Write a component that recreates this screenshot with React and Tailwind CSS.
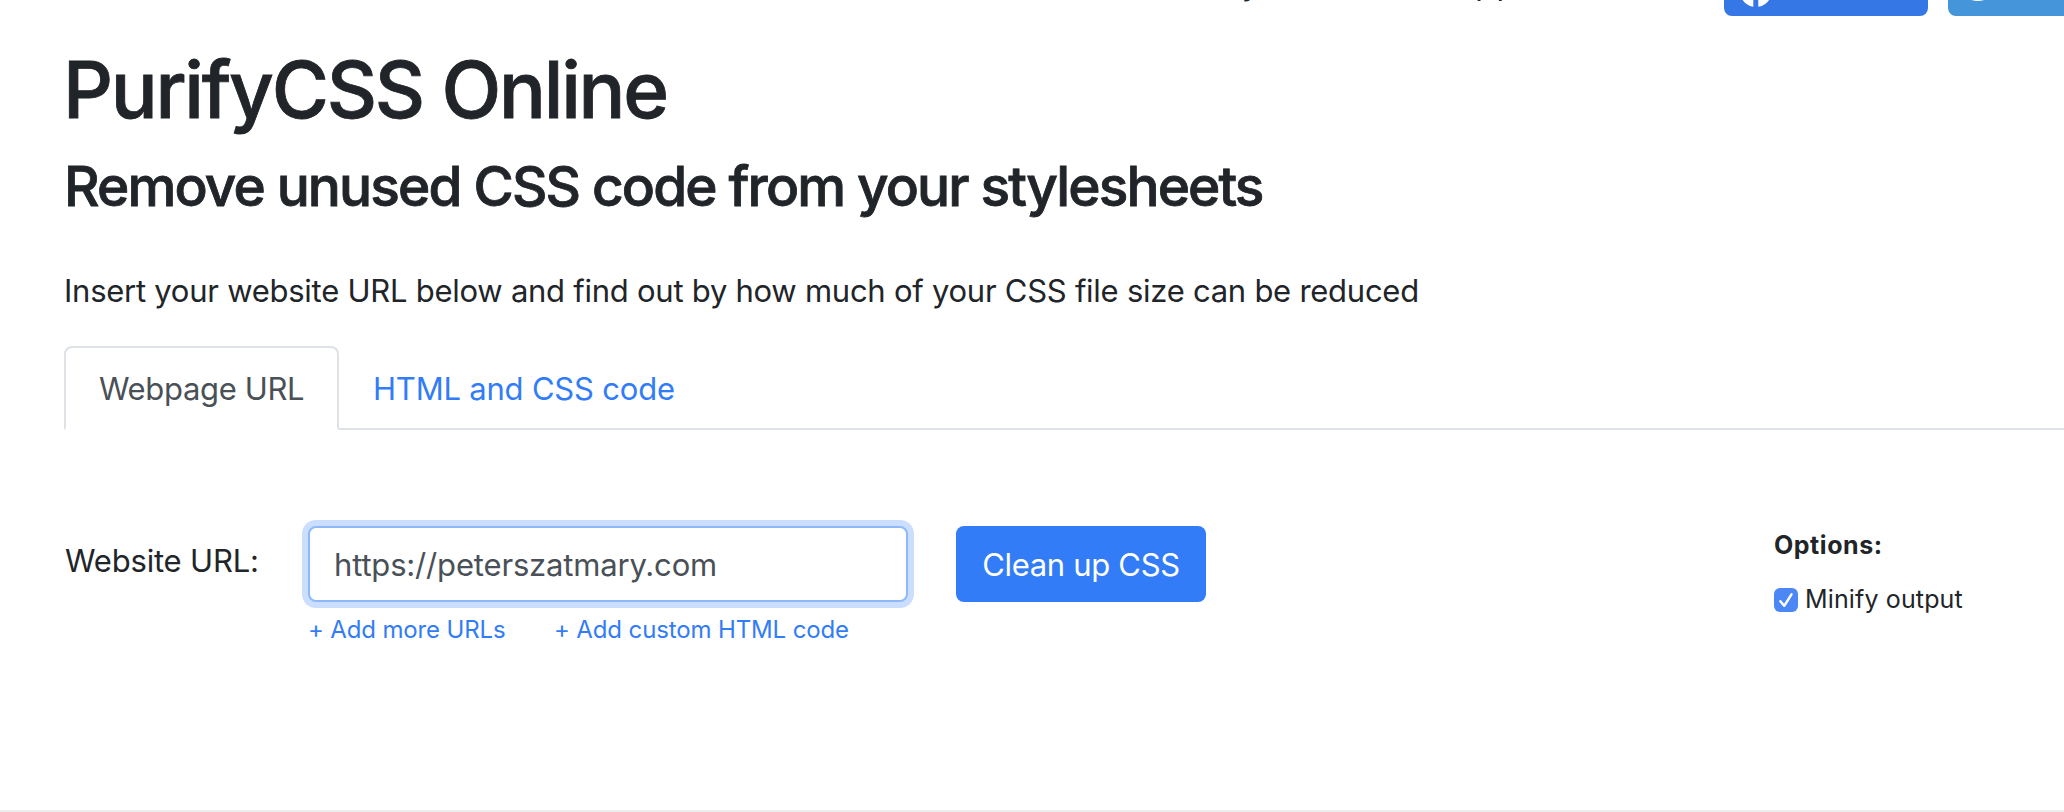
import { FaTwitter } from "react-icons/fa";

function FacebookMark() {
  return (
    <svg viewBox="0 0 32 32" className="size-8 shrink-0" aria-hidden="true">
      <path
        fill="#fff"
        d="M13.3 31.8A16 16 0 1 1 18.3 31.8V20.6h4l.8-4.6h-4.8v-3c0-1.3.7-2.5 2.7-2.5h2.1V6.6s-1.9-.3-3.7-.3c-3.8 0-6.1 2.3-6.1 6.3V16H9.2v4.6h4.1Z"
      />
    </svg>
  );
}

function TopBar() {
  return (
    <header className="flex h-4 items-end overflow-hidden">
      <div className="ml-[1242px] w-[482px] shrink-0 pb-[12px]">
        <p className="text-[31px] leading-10 tracking-[2.15px] whitespace-nowrap">you like it? Support</p>
      </div>
      <a className="flex h-[76px] w-[204px] shrink-0 items-end rounded-lg bg-[#3578e5] pb-[9px] pl-[16px]">
        <FacebookMark />
      </a>
      <a className="ml-5 flex h-[76px] w-[204px] shrink-0 items-end rounded-lg bg-[#4595db] pb-[12px] pl-[20px] text-white">
        <FaTwitter size={31} />
      </a>
    </header>
  );
}

function Tabs() {
  return (
    <nav className="mt-[31px] flex h-[84px] w-[2064px] border-b-2 border-[#dee2e6] text-[31px] leading-[48px]">
      <a className="-mb-0.5 w-[275px] shrink-0 rounded-t-lg border-2 border-[#dee2e6] border-b-white bg-white pt-[17px] pl-[33px] tracking-[-0.35px] text-[#495057]">
        Webpage URL
      </a>
      <a className="pt-[19px] pl-[34px] tracking-[-0.2px] text-[#327cf7]">HTML and CSS code</a>
    </nav>
  );
}

function UrlForm() {
  return (
    <section className="mt-24 flex h-[284px] items-start">
      <label className="w-[244px] pt-[11px] pl-px text-[31px] leading-[48px] tracking-[-0.19px]">Website URL:</label>
      <div className="w-[600px]">
        <div className="flex h-[76px] items-center rounded-lg border-2 border-[#8bb9fa] bg-white pt-px pl-[24px] text-[31px] leading-[48px] tracking-[-0.17px] text-[#495057] ring-6 ring-[#cbdefe]">
          https://peterszatmary.com
        </div>
        <div className="flex pt-[10px] text-[24px] leading-9 text-[#327cf7]">
          <a className="w-[246px] tracking-[-0.14px]">+ Add more URLs</a>
          <a className="tracking-[-0.13px]">+ Add custom HTML code</a>
        </div>
      </div>
      <button className="ml-12 h-[76px] w-[250px] rounded-lg bg-[#327cf7] pt-px text-[31px] leading-[48px] tracking-[-0.32px] text-white">
        Clean up CSS
      </button>
      <div className="ml-[568px] pt-px text-[25px] leading-9">
        <h3 className="font-bold tracking-[0.55px]">Options:</h3>
        <label className="mt-[18px] flex items-center tracking-[0.14px]">
          <span className="mt-[2px] mr-[7px] flex size-6 items-center justify-center rounded-[6px] bg-[#4c87f6]">
            <svg viewBox="0 0 24 24" className="size-6" fill="none" stroke="#fff" strokeWidth="2.5" strokeLinecap="round" strokeLinejoin="round">
              <path d="M6.4 13.3 10.2 17.8 17.5 6.4" />
            </svg>
          </span>
          Minify output
        </label>
      </div>
    </section>
  );
}

export default function App() {
  return (
    <div className="h-[812px] overflow-hidden border-b-2 border-[#eeeeee] bg-white font-['Inter',sans-serif] text-[#212529]">
      <TopBar />
      <main className="pl-16 whitespace-nowrap">
        <h1 className="mt-[26px] -ml-px text-[78px] leading-[96px] font-medium tracking-[-2.25px] [-webkit-text-stroke:0.8px_#212529]">
          PurifyCSS Online
        </h1>
        <h2 className="mt-[14px] text-[55px] leading-[68px] font-medium tracking-[-1.87px] [-webkit-text-stroke:0.8px_#212529]">
          Remove unused CSS code from your stylesheets
        </h2>
        <p className="mt-[47px] text-[31px] leading-[48px] tracking-[-0.255px]">
          Insert your website URL below and find out by how much of your CSS file size can be reduced
        </p>
        <Tabs />
        <UrlForm />
      </main>
    </div>
  );
}
